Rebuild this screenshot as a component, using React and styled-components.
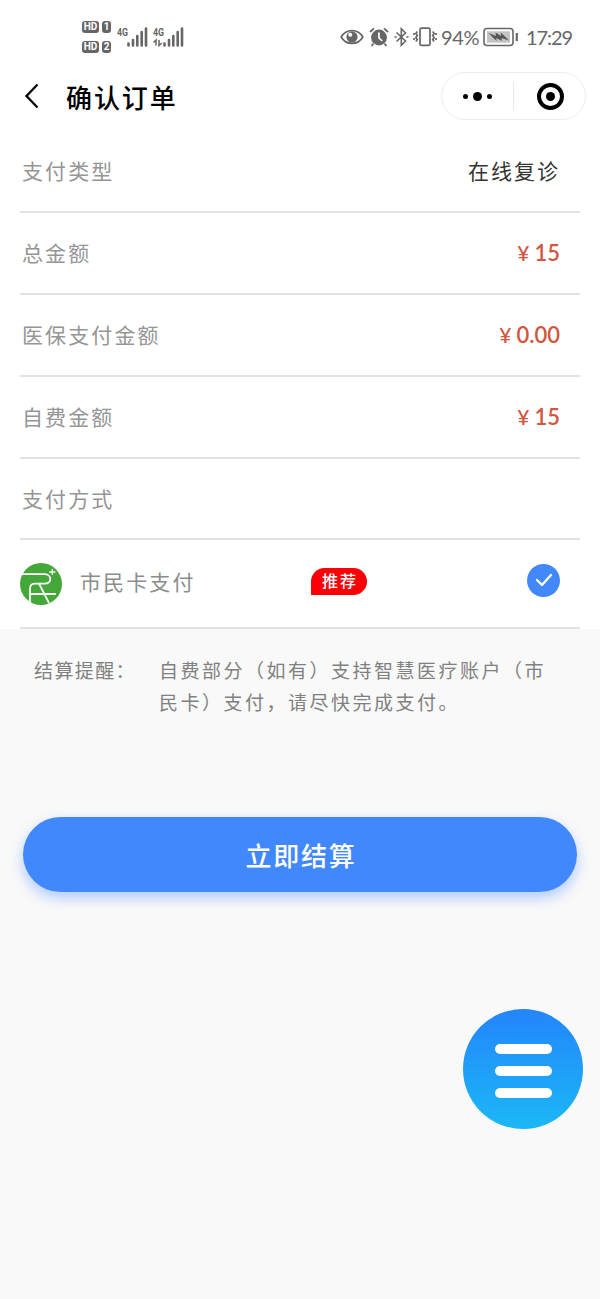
import React from 'react';
import styled, { createGlobalStyle } from 'styled-components';

const App = () => {
  return (
    <>
      <GlobalStyle />
      <Page>
        <StatusBar />
        <Header>
          <BackIcon viewBox="0 0 16 26">
            <path d="M14.5 1.5 L3.5 13 L14.5 24.5" />
          </BackIcon>
          <Title>确认订单</Title>
          <Capsule>
            <Dots>
              <Dot $size={5} />
              <Dot $size={9} />
              <Dot $size={5} />
            </Dots>
            <Divider />
            <Target>
              <Dot $size={9} />
            </Target>
          </Capsule>
        </Header>
        <List>
          <Row>
            <Label>支付类型</Label>
            <Value>在线复诊</Value>
          </Row>
          {amounts.map((item) => (
            <Row key={item.label}>
              <Label>{item.label}</Label>
              <Price>
                <Yen>¥</Yen>
                {item.amount}
              </Price>
            </Row>
          ))}
          <Row $height={81}>
            <Label>支付方式</Label>
          </Row>
          <Row $height={89}>
            <CardLogo />
            <CardName>市民卡支付</CardName>
            <Badge>推荐</Badge>
            <Check>
              <svg width="18" height="14" viewBox="0 0 18 14">
                <path d="M2 7 L7 12 L16 2" />
              </svg>
            </Check>
          </Row>
        </List>
        <Notice>
          <NoticeTitle>结算提醒：</NoticeTitle>
          <NoticeText>
            自费部分（如有）支持智慧医疗账户（市
            <br />
            民卡）支付，请尽快完成支付。
          </NoticeText>
        </Notice>
        <PayButton>立即结算</PayButton>
        <FloatMenu>
          <Line />
          <Line />
          <Line />
        </FloatMenu>
      </Page>
    </>
  );
};

const amounts = [
  { label: '总金额', amount: '15' },
  { label: '医保支付金额', amount: '0.00' },
  { label: '自费金额', amount: '15' },
];

const StatusBar = () => (
  <Status>
    <SimBadges>
      {[1, 2].map((n) => (
        <SimRow key={n}>
          <Hd>HD</Hd>
          <Sim>{n}</Sim>
        </SimRow>
      ))}
    </SimBadges>
    <Signal />
    <Signal data />
    <StatusRight>
      <svg width="24" height="18" viewBox="0 0 24 18">
        <path d="M1.2 9 C6 0.5 18 0.5 22.8 9 C18 17.5 6 17.5 1.2 9Z" fill="none" stroke="#666" strokeWidth="1.7" />
        <circle cx="12" cy="9" r="5.6" fill="#666" />
        <circle cx="10.3" cy="6.8" r="2" fill="#fff" />
      </svg>
      <AlarmIcon width="20" height="20" viewBox="0 0 20 20">
        <circle cx="10" cy="10.5" r="7.9" fill="#666" />
        <path d="M1 5 L5 1.3 M19 5 L15 1.3 M4.5 16.5 L2.5 19 M15.5 16.5 L17.5 19" stroke="#666" strokeWidth="1.8" />
        <path d="M10 5.5 V11 L13.2 14" fill="none" stroke="#fff" strokeWidth="1.7" />
      </AlarmIcon>
      <BluetoothIcon width="15" height="20" viewBox="0 0 15 20">
        <path d="M2.5 5.5 L11.5 14 L7.3 18.2 V1.8 L11.5 6 L2.5 14.5" />
        <path d="M0.5 10 H2.7 M12.3 10 H14.5" />
      </BluetoothIcon>
      <VibrateIcon width="24" height="20" viewBox="0 0 24 20">
        <rect x="7" y="1.2" width="10" height="17.2" rx="1.5" />
        <path d="M4.3 4.5 L2.9 6.5 L4.3 8.5 L2.9 10.5 L4.3 12.5 L2.9 14.5 M1 6 V8 M1 11 V13 M19.7 4.5 L21.1 6.5 L19.7 8.5 L21.1 10.5 L19.7 12.5 L21.1 14.5 M23 6 V8 M23 11 V13" />
      </VibrateIcon>
      <Percent>94%</Percent>
      <BatteryIcon width="36" height="20" viewBox="0 0 36 20">
        <rect x="1" y="1.5" width="29" height="17" rx="3" fill="none" stroke="#666" strokeWidth="1.6" />
        <rect x="4" y="4.3" width="23" height="11.4" fill="#c4c4c4" />
        <path d="M5.5 6 L13 9 L12.5 5.5 L18 9 L17.8 5.5 L26 13.5 L18.5 11 L19 14 L13.3 11 L13.5 14Z" fill="#555" />
        <path d="M33.8 6 V14" stroke="#666" strokeWidth="2.2" />
      </BatteryIcon>
      <Clock>17:29</Clock>
    </StatusRight>
  </Status>
);

const Signal = ({ data }) => (
  <SignalIcon width="32" height="22" viewBox="0 0 32 22">
    <text x="0" y="10" textLength="11" lengthAdjust="spacingAndGlyphs">
      4G
    </text>
    <path d="M11.5 19.5 V17.5 M16 19.5 V14 M20.3 19.5 V10 M24.7 19.5 V6 M29 19.5 V2.5" />
    {data && (
      <DataArrows d="M0.5 16.5 L3 14 V19.5 M6 14 V19.5 L8.8 17" />
    )}
  </SignalIcon>
);

const CardLogo = () => (
  <Logo viewBox="0 0 42 42">
    <circle cx="21" cy="21" r="21" fill="#43a838" />
    <g fill="none" stroke="#fff" strokeWidth="1.8">
      <path d="M2 11.2 H24.5 C32 11.2 32.5 20.7 24.5 20.7 H15 C11.5 20.7 10 22.5 10 26 V39" />
      <path d="M19 20.7 L29 40 M10 31 H36" />
      <path d="M32.3 6 V12 M29.3 9 H35.3" strokeWidth="1.3" />
    </g>
  </Logo>
);

//Styling
const GlobalStyle = createGlobalStyle`
  * {
    box-sizing: border-box;
  }
  body {
    margin: 0;
    background: #f9f9f9;
    font-family: Lato, 'Noto Sans CJK SC', sans-serif;
  }
`;

const Page = styled.div`
  width: 600px;
  height: 1299px;
  overflow: hidden;
  background: #f9f9f9;
`;

const Status = styled.div`
  display: flex;
  align-items: center;
  height: 72px;
  padding: 2px 28px 0 82px;
  background: #fff;
  color: #666;
`;

const SimBadges = styled.div`
  display: flex;
  flex-direction: column;
  gap: 8px;
  margin-right: 6px;
`;

const SimRow = styled.div`
  display: flex;
  gap: 3px;
`;

const Hd = styled.span`
  width: 17px;
  height: 12px;
  border-radius: 3px;
  background: #666;
  color: #fff;
  font: bold 10px/12px Roboto, sans-serif;
  text-align: center;
`;

const Sim = styled(Hd)`
  width: 9px;
`;

const SignalIcon = styled.svg`
  margin-right: 4px;
  text {
    fill: #666;
    font: bold 11px Roboto, sans-serif;
  }
  path {
    fill: none;
    stroke: #666;
    stroke-width: 2.6;
    stroke-linecap: round;
  }
`;

const DataArrows = styled.path`
  && {
    stroke-width: 1.5;
    stroke-linecap: butt;
  }
`;

const StatusRight = styled.div`
  display: flex;
  align-items: center;
  margin-left: auto;
`;

const AlarmIcon = styled.svg`
  margin-left: 5px;
`;

const BluetoothIcon = styled.svg`
  margin-left: 5px;
  fill: none;
  stroke: #666;
  stroke-width: 1.6;
`;

const VibrateIcon = styled.svg`
  margin-left: 4px;
  fill: none;
  stroke: #666;
  stroke-width: 1.7;
`;

const Percent = styled.span`
  width: 39px;
  margin-left: 4px;
  font-size: 20px;
  letter-spacing: -0.3px;
  white-space: nowrap;
`;

const BatteryIcon = styled.svg`
  margin-left: 3px;
`;

const Clock = styled.span`
  width: 46px;
  margin-left: 7px;
  font-size: 20px;
  letter-spacing: -1.1px;
  white-space: nowrap;
`;

const Header = styled.div`
  display: flex;
  align-items: center;
  height: 59px;
  padding: 0 14px 11px 23px;
  background: #fff;
`;

const BackIcon = styled.svg`
  width: 16px;
  height: 26px;
  fill: none;
  stroke: #000;
  stroke-width: 2.3;
`;

const Title = styled.h1`
  margin: 0 0 0 27px;
  color: #000;
  font-size: 26px;
  font-weight: 500;
  letter-spacing: 1.9px;
`;

const Capsule = styled.div`
  display: flex;
  align-items: center;
  width: 145px;
  height: 48px;
  margin-left: auto;
  border: 1.5px solid #ebebeb;
  border-radius: 24px;
`;

const Dots = styled.div`
  flex: 1;
  display: flex;
  align-items: center;
  justify-content: center;
  gap: 5px;
`;

const Dot = styled.span`
  width: ${(props) => props.$size}px;
  height: ${(props) => props.$size}px;
  border-radius: 50%;
  background: #000;
`;

const Divider = styled.div`
  width: 1px;
  height: 28px;
  background: #e8e8e8;
`;

const Target = styled.div`
  display: flex;
  align-items: center;
  justify-content: center;
  width: 27px;
  height: 27px;
  margin: 0 21px 0 23px;
  border: 4px solid #000;
  border-radius: 50%;
`;

const List = styled.div`
  padding: 0 20px;
  background: #fff;
`;

const Row = styled.div`
  display: flex;
  align-items: center;
  height: ${(props) => props.$height || 82}px;
  padding: 0 20px 2px 0;
  border-bottom: 2px solid #e2e2e2;
`;

const Label = styled.span`
  padding-left: 2px;
  color: #959595;
  font-size: 21px;
  letter-spacing: 2.1px;
`;

const Value = styled.span`
  margin-left: auto;
  color: #333;
  font-size: 21px;
  letter-spacing: 2px;
`;

const Price = styled.span`
  display: flex;
  align-items: center;
  margin-left: auto;
  color: #d05741;
  font-size: 22px;
  font-weight: 600;
`;

const Yen = styled.span`
  margin-right: 5px;
  font-size: 21px;
  font-weight: 500;
`;

const Logo = styled.svg`
  width: 42px;
  height: 42px;
  margin-top: 2px;
`;

const CardName = styled.span`
  width: 231px;
  margin: -3px 0 0 18px;
  color: #8c8c8c;
  font-size: 21px;
  letter-spacing: 2.1px;
`;

const Badge = styled.span`
  width: 56px;
  height: 27px;
  margin-top: -3px;
  border-radius: 14px 14px 14px 0;
  background: #fb0007;
  color: #fff;
  font-size: 16px;
  font-weight: 500;
  line-height: 26px;
  letter-spacing: 2px;
  text-indent: 2px;
  text-align: center;
`;

const Check = styled.span`
  display: flex;
  align-items: center;
  justify-content: center;
  width: 33px;
  height: 33px;
  margin: -5px 0 0 auto;
  border-radius: 50%;
  background: #4388fb;
  svg {
    fill: none;
    stroke: #fff;
    stroke-width: 2.3;
    stroke-linecap: round;
    stroke-linejoin: round;
  }
`;

const Notice = styled.div`
  display: flex;
  height: 188px;
  padding: 26px 0 0 34px;
  color: #808080;
  font-size: 19px;
  line-height: 31.5px;
`;

const NoticeTitle = styled.span`
  width: 125px;
  letter-spacing: 1.4px;
`;

const NoticeText = styled.p`
  margin: 0;
  letter-spacing: 2.5px;
  white-space: nowrap;
`;

const PayButton = styled.button`
  display: block;
  width: 554px;
  height: 75px;
  margin: 0 auto;
  padding: 0 0 1px 2px;
  border: none;
  border-radius: 38px;
  background: #4288fd;
  box-shadow: 0 6px 14px rgba(66, 136, 253, 0.4);
  color: #fff;
  font-family: inherit;
  font-size: 26px;
  font-weight: 500;
  letter-spacing: 1.8px;
`;

const FloatMenu = styled.div`
  position: absolute;
  top: 1009px;
  left: 463px;
  display: flex;
  flex-direction: column;
  align-items: center;
  justify-content: center;
  gap: 12px;
  width: 120px;
  height: 120px;
  padding-top: 3px;
  border-radius: 50%;
  background: linear-gradient(#2385fc, #1bb8f5);
`;

const Line = styled.span`
  width: 57px;
  height: 10px;
  border-radius: 5px;
  background: #fff;
`;

export default App;
